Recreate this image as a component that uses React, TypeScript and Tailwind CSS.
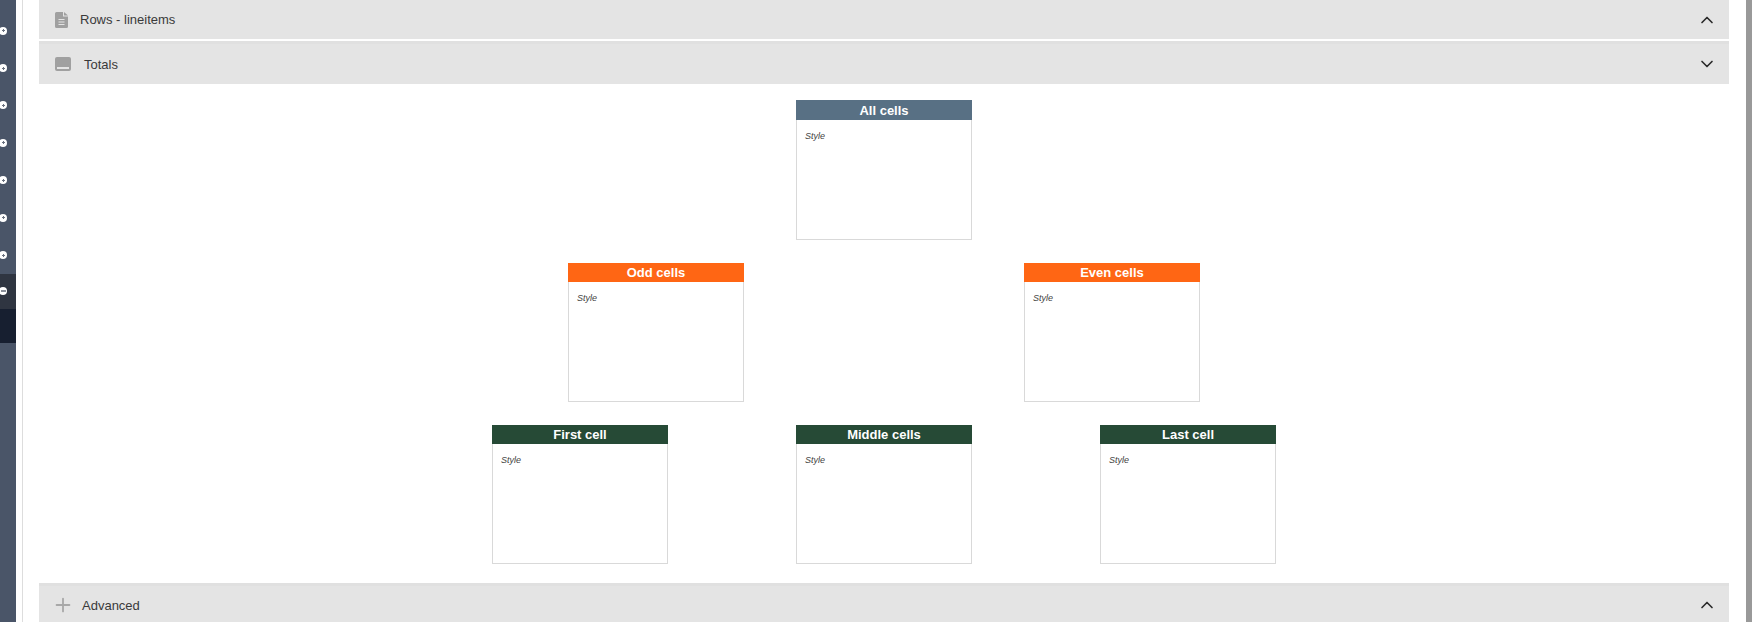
import React from "react";
import { ChevronDown, ChevronUp, Plus } from "lucide-react";

const navRows = [0, 1, 2, 3, 4, 5, 6];

function NavDot({ minus = false }: { minus?: boolean }) {
  return (
    <span className="relative ml-[-1px] flex h-[8px] w-[8px] items-center justify-center rounded-full bg-white">
      <span className={`${minus ? "h-[2px] w-[5px] bg-[#8a8f99]" : "h-[1px] w-[3px] bg-[#6b7280]"}`} />
      {!minus && <span className="absolute h-[3px] w-[1px] bg-[#6b7280]" />}
    </span>
  );
}

function Sidebar() {
  return (
    <div className="flex w-[16px] shrink-0 flex-col bg-[#4a5568]">
      <div className="h-[12px] shrink-0" />
      {navRows.map((r) => (
        <div key={r} className="flex h-[37.4px] shrink-0 items-center">
          <NavDot />
        </div>
      ))}
      <div className="flex h-[35px] shrink-0 items-center bg-[#2f3541]">
        <NavDot minus />
      </div>
      <div className="h-[34px] shrink-0 bg-[#171f30]" />
    </div>
  );
}

function PanelHeader({
  icon,
  title,
  gap,
  open,
  className,
}: {
  icon: React.ReactNode;
  title: string;
  gap: string;
  open: boolean;
  className: string;
}) {
  return (
    <div className={`flex items-center bg-[#e4e4e4] pl-[16px] pr-[12px] ${className}`}>
      <span className="flex w-[16px] shrink-0 justify-center">{icon}</span>
      <span className={`flex-1 text-[13px] text-[#3a3a3a] ${gap}`}>{title}</span>
      {open ? (
        <ChevronUp size={20} strokeWidth={2} className="text-[#2a2a2a]" />
      ) : (
        <ChevronDown size={20} strokeWidth={2} className="text-[#2a2a2a]" />
      )}
    </div>
  );
}

function DocIcon() {
  return (
    <svg width="13" height="16" viewBox="0 0 13 16" className="ml-[-3px] shrink-0">
      <path fill="#a0a0a0" d="M1.5 0H8v4.5h5v10a1.5 1.5 0 0 1-1.5 1.5h-10A1.5 1.5 0 0 1 0 14.5v-13A1.5 1.5 0 0 1 1.5 0z" />
      <path fill="#a0a0a0" d="M9 0l4 3.5H9z" />
      <path fill="#e4e4e4" d="M3.5 7h6v1h-6zM3.5 9.5h6v1h-6zM3.5 12h6v1h-6z" />
    </svg>
  );
}

function TrayIcon() {
  return (
    <svg width="16" height="14" viewBox="0 0 16 14" className="shrink-0">
      <rect width="16" height="14" rx="2" fill="#a0a0a0" />
      <rect x="2" y="10" width="12" height="2" fill="#e4e4e4" />
    </svg>
  );
}

function Cell({ title, color, height, head }: { title: string; color: string; height: string; head: string }) {
  return (
    <div className={`flex w-[176px] flex-col border border-[#d9d9d9] bg-white ${height}`}>
      <div className={`mx-[-1px] mt-[-1px] text-center text-[13px] font-bold text-white ${head} ${color}`}>
        {title}
      </div>
      <div className="pl-[8px] pt-[9px] text-[9px] italic leading-[14px] text-[#444444]">Style</div>
    </div>
  );
}

export default function App() {
  return (
    <div className="flex h-[622px] w-[1752px] overflow-hidden bg-white font-['Liberation_Sans',sans-serif]">
      <Sidebar />
      <div className="ml-[6px] flex w-[1723px] flex-col border-l border-[#dddddd] pl-[16px]">
        <div className="w-[1690px]">
          <PanelHeader icon={<DocIcon />} title="Rows - lineitems" gap="ml-[9px]" open className="h-[39px]" />
          <PanelHeader
            icon={<TrayIcon />}
            title="Totals"
            gap="ml-[13px] pt-[1px]"
            open={false}
            className="mt-[2px] h-[43px] border-t-[3px] border-[#e0e0e0]"
          />
          <div className="flex h-[499px] flex-col items-center pt-[16px]">
            <div className="flex justify-center">
              <Cell title="All cells" color="bg-[#587084]" height="h-[140px]" head="h-[20px] leading-[21px]" />
            </div>
            <div className="mt-[23px] flex justify-center gap-[280px]">
              <Cell title="Odd cells" color="bg-[#ff6614]" height="h-[139px]" head="h-[19px] leading-[20px]" />
              <Cell title="Even cells" color="bg-[#ff6614]" height="h-[139px]" head="h-[19px] leading-[20px]" />
            </div>
            <div className="mt-[23px] flex justify-center gap-[128px]">
              <Cell title="First cell" color="bg-[#264a36]" height="h-[139px]" head="h-[19px] leading-[20px]" />
              <Cell title="Middle cells" color="bg-[#264a36]" height="h-[139px]" head="h-[19px] leading-[20px]" />
              <Cell title="Last cell" color="bg-[#264a36]" height="h-[139px]" head="h-[19px] leading-[20px]" />
            </div>
          </div>
          <PanelHeader
            icon={<Plus size={22} strokeWidth={2} className="shrink-0 text-[#a8a8a8]" />}
            title="Advanced"
            gap="ml-[11px] pt-[1px]"
            open
            className="h-[41px] border-t-[3px] border-[#e0e0e0]"
          />
        </div>
      </div>
      <div className="ml-auto w-[6px] bg-[#999999]" />
    </div>
  );
}
